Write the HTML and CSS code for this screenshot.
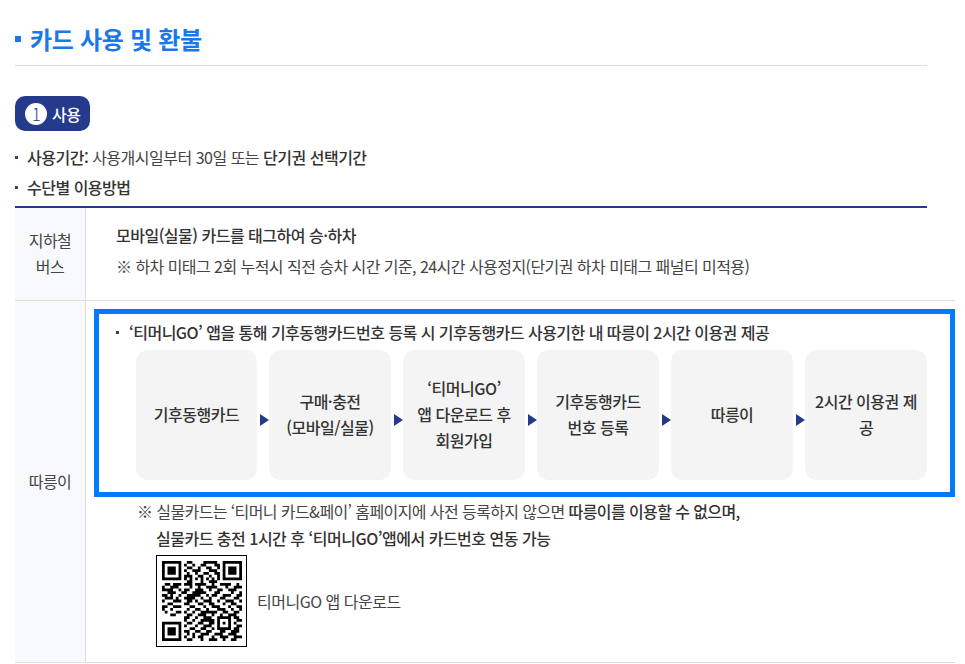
FILE: index.html
```html
<!DOCTYPE html>
<html lang="ko">
<head>
<meta charset="utf-8">
<title>카드 사용 및 환불</title>
<link rel="stylesheet" href="styles.css">
</head>
<body>
<main class="page">
  <h2 class="title">카드 사용 및 환불</h2>
  <div class="badge"><span class="badge-num">1</span>사용</div>
  <ul class="summary">
    <li><b>사용기간:</b> 사용개시일부터 30일 또는 <b>단기권 선택기간</b></li>
    <li><b>수단별 이용방법</b></li>
  </ul>
  <div class="table">
    <div class="head head-a">지하철<br>버스</div>
    <div class="cell cell-a">
      <p class="lead">모바일(실물) 카드를 태그하여 승·하차</p>
      <p class="note">※ 하차 미태그 2회 누적시 직전 승차 시간 기준, 24시간 사용정지(단기권 하차 미태그 패널티 미적용)</p>
    </div>
    <div class="head head-b">따릉이</div>
    <div class="cell cell-b">
      <section class="highlight">
        <p class="highlight-title">‘티머니GO’ 앱을 통해 기후동행카드번호 등록 시 기후동행카드 사용기한 내 따릉이 2시간 이용권 제공</p>
        <ol class="steps">
          <li class="step">기후동행카드</li>
          <li class="step">구매·충전<br>(모바일/실물)</li>
          <li class="step">‘티머니GO’<br>앱 다운로드 후<br>회원가입</li>
          <li class="step">기후동행카드<br>번호 등록</li>
          <li class="step">따릉이</li>
          <li class="step">2시간 이용권 제공</li>
        </ol>
      </section>
      <div class="after">
        <p class="after-1">※ 실물카드는 ‘티머니 카드&amp;페이’ 홈페이지에 사전 등록하지 않으면 <b>따릉이를 이용할 수 없으며,</b></p>
        <p class="after-2">실물카드 충전 1시간 후 ‘티머니GO’앱에서 카드번호 연동 가능</p>
        <div class="qr-row">
          <div class="qr">
            <svg viewBox="0 0 29 29" width="80" height="80" aria-hidden="true">
              <path class="qr-mod" d="M0 .5h7M9 .5h2M15 .5h5M22 .5h7M0 1.500h1M6 1.500h1M8 1.500h1M11 1.500h1M14 1.500h2M19 1.500h2M22 1.500h1M28 1.500h1M0 2.500h1M2 2.500h3M6 2.500h1M9 2.500h2M13 2.500h1M16 2.500h2M20 2.500h1M22 2.500h1M24 2.500h3M28 2.500h1M0 3.500h1M2 3.500h3M6 3.500h1M8 3.500h1M11 3.500h3M17 3.500h3M22 3.500h1M24 3.500h3M28 3.500h1M0 4.500h1M2 4.500h3M6 4.500h1M9 4.500h1M12 4.500h1M15 4.500h2M19 4.500h2M22 4.500h1M24 4.500h3M28 4.500h1M0 5.500h1M6 5.500h1M8 5.500h3M13 5.500h2M17 5.500h1M20 5.500h1M22 5.500h1M28 5.500h1M0 6.500h7M8 6.500h1M10 6.500h1M12 6.500h1M14 6.500h1M16 6.500h1M18 6.500h1M20 6.500h1M22 6.500h7M9 7.500h2M14 7.500h1M17 7.500h3M1 8.500h2M4 8.500h3M8 8.500h3M12 8.500h4M18 8.500h1M21 8.500h4M27 8.500h1M0 9.500h1M3 9.500h3M10 9.500h1M13 9.500h1M16 9.500h4M23 9.500h1M26 9.500h3M0 10.500h4M6 10.500h1M8 10.500h2M12 10.500h3M17 10.500h1M20 10.500h2M24 10.500h3M2 11.500h3M7 11.500h2M11 11.500h5M19 11.500h2M25 11.500h1M28 11.500h1M0 12.500h2M3 12.500h1M6 12.500h1M9 12.500h5M16 12.500h1M18 12.500h2M22 12.500h3M27 12.500h2M1 13.500h3M5 13.500h1M8 13.500h4M14 13.500h1M17 13.500h1M21 13.500h2M26 13.500h2M0 14.500h1M4 14.500h3M9 14.500h2M12 14.500h1M15 14.500h3M20 14.500h1M23 14.500h3M28 14.500h1M2 15.500h2M8 15.500h2M13 15.500h2M17 15.500h2M22 15.500h1M25 15.500h2M0 16.500h2M4 16.500h3M10 16.500h2M15 16.500h1M18 16.500h3M24 16.500h1M27 16.500h2M0 17.500h1M3 17.500h1M9 17.500h1M12 17.500h2M16 17.500h1M20 17.500h3M25 17.500h1M28 17.500h1M1 18.500h1M5 18.500h2M8 18.500h1M11 18.500h1M14 18.500h6M22 18.500h2M26 18.500h2M3 19.500h2M9 19.500h2M13 19.500h3M18 19.500h1M21 19.500h1M24 19.500h3M8 20.500h2M12 20.500h1M15 20.500h3M20 20.500h5M26 20.500h2M8 21.500h1M11 21.500h1M14 21.500h5M20 21.500h1M24 21.500h1M27 21.500h2M0 22.500h7M9 22.500h2M13 22.500h2M17 22.500h2M20 22.500h1M22 22.500h1M24 22.500h1M26 22.500h1M0 23.500h1M6 23.500h1M8 23.500h1M12 23.500h1M15 23.500h3M20 23.500h1M24 23.500h1M27 23.500h2M0 24.500h1M2 24.500h3M6 24.500h1M10 24.500h2M14 24.500h2M18 24.500h1M20 24.500h5M26 24.500h2M0 25.500h1M2 25.500h3M6 25.500h1M8 25.500h2M12 25.500h2M16 25.500h2M21 25.500h2M25 25.500h3M0 26.500h1M2 26.500h3M6 26.500h1M9 26.500h1M11 26.500h1M14 26.500h3M19 26.500h3M24 26.500h3M0 27.500h1M6 27.500h1M8 27.500h1M11 27.500h1M13 27.500h2M18 27.500h1M21 27.500h3M26 27.500h3M0 28.500h7M9 28.500h2M14 28.500h1M17 28.500h3M22 28.500h1M25 28.500h2"/>
            </svg>
          </div>
          <span class="qr-caption">티머니GO 앱 다운로드</span>
        </div>
      </div>
    </div>
  </div>
</main>
</body>
</html>
```
FILE: styles.css
```css
* { box-sizing: border-box; }
html, body { margin: 0; padding: 0; background: #fff; }
body {
  font-family: "Noto Sans CJK KR", "Noto Sans", sans-serif;
  font-size: 16px;
  letter-spacing: -0.5px;
  color: #444;
  overflow: hidden;
}
p, ul, ol, h2 { margin: 0; padding: 0; }
ul, ol { list-style: none; }
b { font-weight: 500; color: #333; }

.page { width: 912px; margin-left: 15px; }

.title {
  display: flex;
  align-items: center;
  gap: 9px;
  height: 66px;
  padding-top: 11px;
  border-bottom: 1px solid #ddd;
  font-size: 24px;
  font-weight: 700;
  letter-spacing: -0.3px;
  color: #1a78e8;
}
.title::before {
  content: "";
  width: 6px;
  height: 6px;
  margin-top: 2px;
  background: #1a78e8;
}

.badge {
  display: inline-flex;
  align-items: center;
  gap: 5px;
  height: 35px;
  margin-top: 30px;
  padding: 0 10px 0 10px;
  border-radius: 10px;
  background: #243b8c;
  color: #fff;
  font-weight: 500;
  vertical-align: top;
}
.badge-num {
  display: flex;
  align-items: center;
  justify-content: center;
  width: 22px;
  height: 22px;
  border-radius: 50%;
  background: #fff;
  color: #243b8c;
  font-size: 17px;
  font-weight: 300;
}

.summary { margin-top: 11px; }
.summary li {
  display: block;
  line-height: 30px;
  height: 30px;
  padding-left: 12px;
  position: relative;
}
.summary li::before {
  content: "";
  position: absolute;
  left: 0;
  top: 14px;
  width: 3px;
  height: 3px;
  background: #444;
}

.table {
  display: grid;
  grid-template-columns: 71px 1fr;
  margin-top: 4px;
  border-top: 2px solid #243b8c;
}
.head {
  display: flex;
  align-items: center;
  justify-content: center;
  padding-bottom: 2px;
  text-align: center;
  line-height: 26px;
  background: #f8f9fd;
  border-right: 1px solid #ddd;
  border-bottom: 1px solid #ddd;
}
.cell { border-bottom: 1px solid #ddd; }
.cell-a { height: 93px; padding: 12px 0 0 30px; }
.lead { margin-bottom: 1px; font-weight: 500; color: #333; line-height: 30px; }
.note { line-height: 30px; letter-spacing: -0.55px; }

.cell-b { height: 362px; padding: 8px 0 0 8px; }
.highlight {
  width: 861px;
  height: 188px;
  padding: 3px 23px 12px 17px;
  border: 5px solid #007bff;
}
.highlight-title {
  position: relative;
  padding-left: 13px;
  line-height: 30px;
  font-weight: 500;
  color: #333;
  letter-spacing: -0.53px;
}
.highlight-title::before {
  content: "";
  position: absolute;
  left: 0;
  top: 14px;
  width: 3px;
  height: 3px;
  background: #444;
}
.steps {
  display: flex;
  gap: 12px;
  height: 130px;
  margin-left: 20px;
  margin-top: 3px;
}
.step {
  position: relative;
  flex: 0 0 122px;
  display: flex;
  align-items: center;
  justify-content: center;
  padding: 0 6px 3px;
  border-radius: 12px;
  background: #f4f4f4;
  text-align: center;
  line-height: 26px;
  font-weight: 500;
  color: #333;
}
.step:first-child { flex-basis: 121px; }
.step + .step::before {
  content: "";
  position: absolute;
  left: -9px;
  top: 64px;
  border-left: 9px solid #243b8c;
  border-top: 6.5px solid transparent;
  border-bottom: 6.5px solid transparent;
}

.after { padding-left: 43px; }
.after-1 { margin-top: 1px; line-height: 27px; letter-spacing: -0.6px; }
.after-2 { padding-left: 19px; line-height: 27px; font-weight: 500; color: #333; }
.qr-row {
  display: flex;
  align-items: center;
  gap: 10px;
  margin-top: 3px;
  padding-left: 19px;
}
.qr {
  display: flex;
  align-items: center;
  justify-content: center;
  width: 91px;
  height: 92px;
  border: 1px solid #000;
  background: #fff;
}
.qr-mod { fill: none; stroke: #000; stroke-width: 1; }
```
